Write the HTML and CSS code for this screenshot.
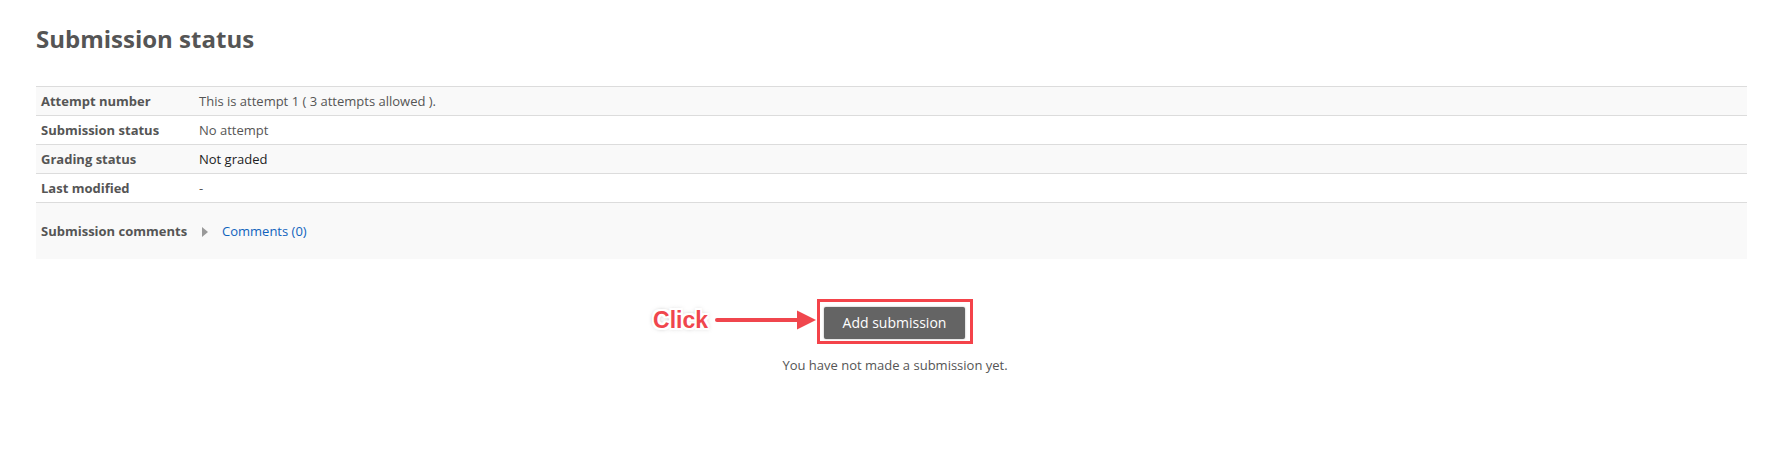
FILE: index.html
```html
<!DOCTYPE html>
<html>
<head>
<meta charset="utf-8">
<link rel="stylesheet" href="styles.css">
</head>
<body>
<div class="page">
  <h2 class="title">Submission status</h2>
  <table class="status">
    <tr class="odd"><th>Attempt number</th><td>This is attempt 1 ( 3 attempts allowed ).</td></tr>
    <tr><th>Submission status</th><td>No attempt</td></tr>
    <tr class="odd"><th>Grading status</th><td class="dark">Not graded</td></tr>
    <tr><th>Last modified</th><td>-</td></tr>
    <tr class="odd tall"><th>Submission comments</th><td><span class="caret"></span><a class="link" href="#">Comments (0)</a></td></tr>
  </table>
  <div class="actions">
    <div class="btnwrap">
      <div class="callout">
        <span class="click">Click</span>
        <svg class="arrow" width="102" height="22" viewBox="0 0 102 22">
          <line x1="2" y1="11" x2="84" y2="11" stroke="#f0464d" stroke-width="4" stroke-linecap="round"/>
          <polygon points="82,1.5 101,11 82,20.5" fill="#f0464d"/>
        </svg>
      </div>
      <div class="highlight"><button class="btn">Add submission</button></div>
    </div>
    <p class="note">You have not made a submission yet.</p>
  </div>
</div>
</body>
</html>
```

FILE: styles.css
```css
html, body { margin: 0; padding: 0; background: #fff; }
body { font-family: "Open Sans", "Liberation Sans", sans-serif; color: #555; }
.page { padding: 0 28px 0 36px; }
.title {
  margin: 0;
  padding-top: 21px;
  font-size: 24px;
  line-height: 36px;
  font-weight: 700;
  color: #555;
}
.status {
  margin-top: 29px;
  width: 100%;
  table-layout: fixed;
  border-collapse: collapse;
  font-size: 13px;
}
.status tr { height: 29px; border-top: 1px solid #dcdcdc; }
.status tr.odd { background: #f9f9f9; }
.status tr.tall { height: 56px; }
.status th {
  box-sizing: border-box;
  text-align: left;
  font-weight: 700;
  color: #555;
  width: 158px;
  padding: 0 4px 0 5px;
  white-space: nowrap;
}
.status td { padding: 0 4px 0 5px; color: #555; }
.status td.dark { color: #1d1d1d; }
.caret {
  display: inline-block;
  width: 0; height: 0;
  border-top: 5px solid transparent;
  border-bottom: 5px solid transparent;
  border-left: 6px solid #9a9a9a;
  margin: 0 14px 0 3px;
  vertical-align: -1px;
}
.link { color: #1063bd; text-decoration: none; }
.actions {
  display: flex;
  flex-direction: column;
  align-items: center;
  padding-left: 7px;
  margin-top: 40px;
}
.btnwrap { position: relative; }
.highlight {
  border: 3px solid #f4434a;
  padding: 5px 5px 2px 4px;
  background: #fff;
}
.btn {
  display: block;
  width: 141px;
  height: 32px;
  background: #646464;
  color: #fff;
  border: 0;
  border-radius: 2px;
  font-family: "Open Sans", sans-serif;
  font-size: 14px;
  box-shadow: 0 0 2px rgba(0,0,0,0.35);
}
.callout {
  position: absolute;
  right: 100%;
  top: 8px;
  display: flex;
  align-items: center;
  gap: 7px;
  white-space: nowrap;
}
.click {
  font-family: "Liberation Sans", Arial, sans-serif;
  font-weight: 700;
  font-size: 23px;
  color: #f0464d;
  text-shadow: -2px -2px 0 #fff, 2px -2px 0 #fff, -2px 2px 0 #fff, 2px 2px 0 #fff, 0 -2px 0 #fff, 0 2px 0 #fff, -2px 0 0 #fff, 2px 0 0 #fff, 0 0 5px rgba(0,0,0,0.5);
}
.arrow { display: block; }
.note {
  margin: 12px 0 0 0;
  font-size: 13px;
  color: #555;
}
```
